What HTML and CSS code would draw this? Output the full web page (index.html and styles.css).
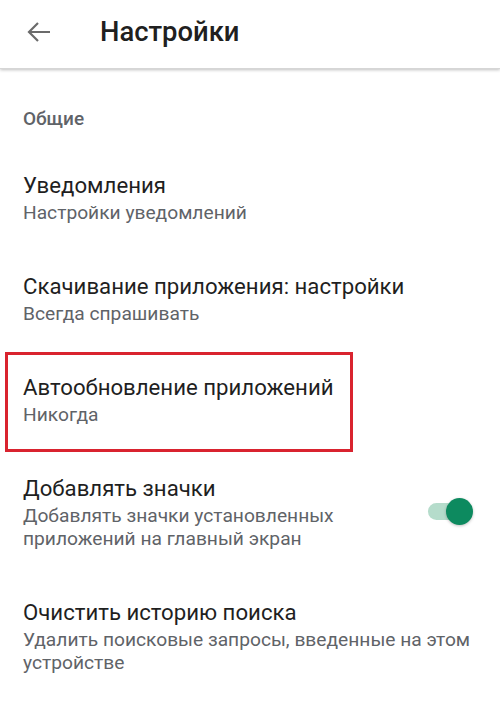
FILE: index.html
```html
<!DOCTYPE html>
<html lang="ru">
<head>
    <meta charset="UTF-8">
    <meta name="viewport" content="width=device-width, initial-scale=1.0">
    <title>Настройки</title>
    <link rel="stylesheet" href="styles.css">
</head>
<body>
<div class="appbar">
    <svg class="back" width="26" height="22" viewBox="0 0 26 22">
        <path d="M24 11H3M12 2L3 11l9 9" fill="none" stroke="#6b6b6b" stroke-width="2.2"/>
    </svg>
    <h1>Настройки</h1>
</div>

<div class="section">Общие</div>

<div class="item">
    <div class="text">
        <div class="title">Уведомления</div>
        <div class="sub">Настройки уведомлений</div>
    </div>
</div>

<div class="item">
    <div class="text">
        <div class="title">Скачивание приложения: настройки</div>
        <div class="sub">Всегда спрашивать</div>
    </div>
</div>

<div class="item marked">
    <div class="text">
        <div class="title">Автообновление приложений</div>
        <div class="sub">Никогда</div>
    </div>
</div>

<div class="item">
    <div class="text">
        <div class="title">Добавлять значки</div>
        <div class="sub">Добавлять значки установленных приложений на главный экран</div>
    </div>
    <div class="switch"><span class="thumb"></span></div>
</div>

<div class="item">
    <div class="text">
        <div class="title">Очистить историю поиска</div>
        <div class="sub">Удалить поисковые запросы, введенные на этом устройстве</div>
    </div>
</div>
</body>
</html>
```

FILE: styles.css
```css
body {
    margin: 0;
    background: #ffffff;
    font-family: Roboto, "Noto Sans", sans-serif;
    color: #202124;
}
.appbar {
    height: 68px;
    display: flex;
    align-items: center;
    box-shadow: 0 1px 3px rgba(0,0,0,0.25);
    border-bottom: 1px solid #d6d6d6;
}
.back { margin-left: 26px; margin-top: -4px; }
h1 {
    margin: -5px 0 0 48px;
    font-size: 27.4px;
    font-weight: 500;
    color: #202020;
}
.section {
    padding: 38px 23px 0;
    font-size: 19px;
    font-weight: 500;
    color: #5f6368;
    height: 39px;
}
.item {
    position: relative;
    display: flex;
    align-items: center;
    padding: 24px 23px 23px;
}
.text { flex: 1; }
.title { font-size: 22.2px; line-height: 31px; color: #1f1f1f; }
.sub { font-size: 19.2px; line-height: 23px; color: #5f6368; }
.marked::after {
    content: "";
    position: absolute;
    left: 5px;
    top: 4px;
    width: 342px;
    height: 94px;
    border: 3px solid #d9232f;
}
.switch {
    position: relative;
    flex: none;
    width: 40px;
    height: 17px;
    border-radius: 9px;
    background: #b5dccb;
    margin: 0 9px 0 20px;
}
.thumb {
    position: absolute;
    right: -5px;
    top: -5px;
    width: 27px;
    height: 27px;
    border-radius: 50%;
    background: #0d8a5f;
    box-shadow: 0 1px 3px rgba(0,0,0,0.25);
}
```
